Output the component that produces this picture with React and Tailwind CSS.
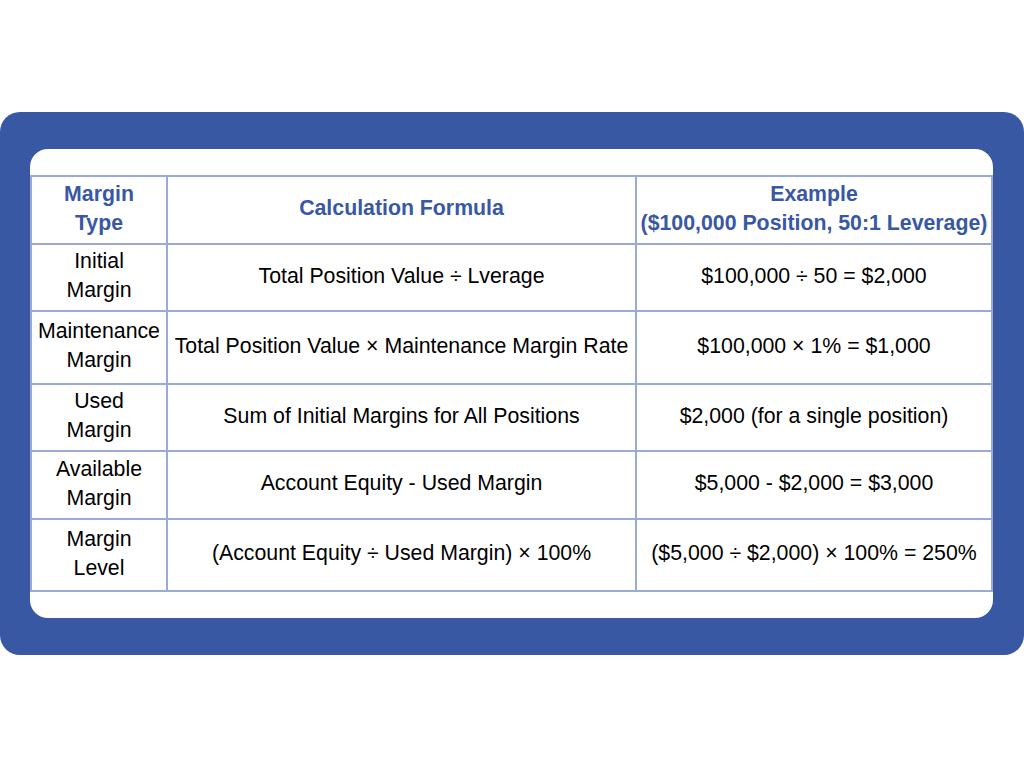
export default function App() {
  const rows = [
    { h: "h-[67px]", a: ["Initial", "Margin"], b: "Total Position Value ÷ Lverage", c: "$100,000 ÷ 50 = $2,000" },
    { h: "h-[73px]", a: ["Maintenance", "Margin"], b: "Total Position Value × Maintenance Margin Rate", c: "$100,000 × 1% = $1,000" },
    { h: "h-[67px]", a: ["Used", "Margin"], b: "Sum of Initial Margins for All Positions", c: "$2,000 (for a single position)" },
    { h: "h-[68px]", a: ["Available", "Margin"], b: "Account Equity - Used Margin", c: "$5,000 - $2,000 = $3,000" },
    { h: "h-[72px]", a: ["Margin", "Level"], b: "(Account Equity ÷ Used Margin) × 100%", c: "($5,000 ÷ $2,000) × 100% = 250%" },
  ];
  const cell = "border-2 border-[#9aabd3] text-center align-middle px-0 pt-0 pb-[3px] whitespace-nowrap";
  return (
    <div className="w-[1024px] h-[768px] bg-white pt-[112px] font-['Liberation_Sans',Arial,sans-serif]">
      <div className="h-[543px] w-full rounded-[20px] bg-[#3858a4] pl-[30px] pr-[31px] pt-[37px]">
        <div className="h-[469px] rounded-[18px] bg-white pt-[26px]">
          <table className="table-fixed border-collapse w-[961px] text-[21.3px] leading-[29px] text-black">
            <colgroup>
              <col className="w-[136px]" />
              <col className="w-[469px]" />
              <col className="w-[356px]" />
            </colgroup>
            <thead>
              <tr className="h-[68px] text-[#3858a4] font-bold">
                <th className={cell}>Margin<br />Type</th>
                <th className={cell}>Calculation Formula</th>
                <th className={cell}>Example<br />($100,000 Position, 50:1 Leverage)</th>
              </tr>
            </thead>
            <tbody>
              {rows.map((r, i) => (
                <tr key={i} className={r.h}>
                  <td className={cell}>{r.a[0]}<br />{r.a[1]}</td>
                  <td className={cell}>{r.b}</td>
                  <td className={cell}>{r.c}</td>
                </tr>
              ))}
            </tbody>
          </table>
        </div>
      </div>
    </div>
  );
}
